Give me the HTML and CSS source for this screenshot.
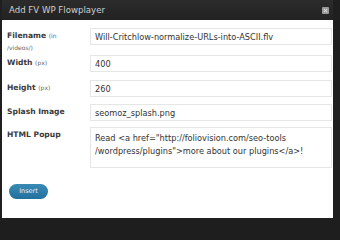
FILE: index.html
```html
<!DOCTYPE html>
<html>
<head>
<meta charset="utf-8">
<link rel="stylesheet" href="styles.css">
</head>
<body>
<div class="dialog">
  <div class="titlebar">
    <span class="title">Add FV WP Flowplayer</span>
    <span class="close"><svg width="7" height="7" viewBox="0 0 7 7"><rect width="7" height="7" rx="1" fill="#9a9a9a"/><path d="M2 2L5 5M5 2L2 5" stroke="#e8e8e8" stroke-width="1"/></svg></span>
  </div>
  <div class="content">
    <div class="row r1">
      <label class="lbl"><span class="line">Filename <small>(in</small></span><small class="line">/videos/)</small></label>
      <div class="field">Will-Critchlow-normalize-URLs-into-ASCII.flv</div>
    </div>
    <div class="row r2">
      <label class="lbl">Width <small>(px)</small></label>
      <div class="field">400</div>
    </div>
    <div class="row r3">
      <label class="lbl">Height <small>(px)</small></label>
      <div class="field">260</div>
    </div>
    <div class="row r4">
      <label class="lbl">Splash Image</label>
      <div class="field">seomoz_splash.png</div>
    </div>
    <div class="row">
      <label class="lbl">HTML Popup</label>
      <div class="field area">Read &lt;a href="http://foliovision.com/seo-tools /wordpress/plugins"&gt;more about our plugins&lt;/a&gt;!</div>
    </div>
    <div class="actions">
      <span class="btn">Insert</span>
    </div>
  </div>
</div>
</body>
</html>
```
FILE: styles.css
```css
html, body {
  margin: 0;
  padding: 0;
  background: #1e1e1e;
  font-family: "DejaVu Sans", sans-serif;
}
.dialog {
  width: 340px;
  height: 221px;
  box-sizing: border-box;
  padding: 0 7px 3px 2px;
  display: flex;
  flex-direction: column;
  background: #1f1f1f;
}
.titlebar {
  height: 20px;
  flex: none;
  display: flex;
  align-items: center;
  justify-content: space-between;
  padding: 0 4px 0 7px;
  background: linear-gradient(#2c2c2c, #222);
}
.title {
  color: #d0d0d0;
  font-size: 8.6px;
}
.close {
  display: flex;
}
.content {
  flex: 1;
  background: #fff;
  padding: 8px 1px 0 5px;
  display: flex;
  flex-direction: column;
}
.row {
  display: flex;
  align-items: flex-start;
}
.r1 { min-height: 27px; }
.r2 { min-height: 25px; }
.r3 { min-height: 24px; }
.r4 { min-height: 23px; }
.lbl {
  width: 60px;
  margin-right: 23px;
  flex: none;
  font-size: 7.6px;
  font-weight: bold;
  color: #3a3a3a;
  padding-top: 2px;
  line-height: 12px;
}
.lbl .line {
  display: block;
}
.lbl small {
  font-size: 6px;
  font-weight: normal;
  color: #666;
}
.field {
  flex: 1;
  height: 17px;
  box-sizing: border-box;
  border: 1px solid #e6e6e6;
  padding: 3px 4px;
  font-size: 8.2px;
  color: #333;
  line-height: 10px;
  white-space: nowrap;
}
.field.area {
  height: 41px;
  white-space: normal;
  padding-top: 4px;
  line-height: 13px;
}
.actions {
  padding-top: 10px;
}
.btn {
  display: inline-block;
  margin-left: 2px;
  width: 39px;
  height: 15px;
  line-height: 15px;
  text-align: center;
  border-radius: 8px;
  background: linear-gradient(#3a8ab6, #21709d);
  color: #e8f2f8;
  font-size: 6.5px;
}
```
